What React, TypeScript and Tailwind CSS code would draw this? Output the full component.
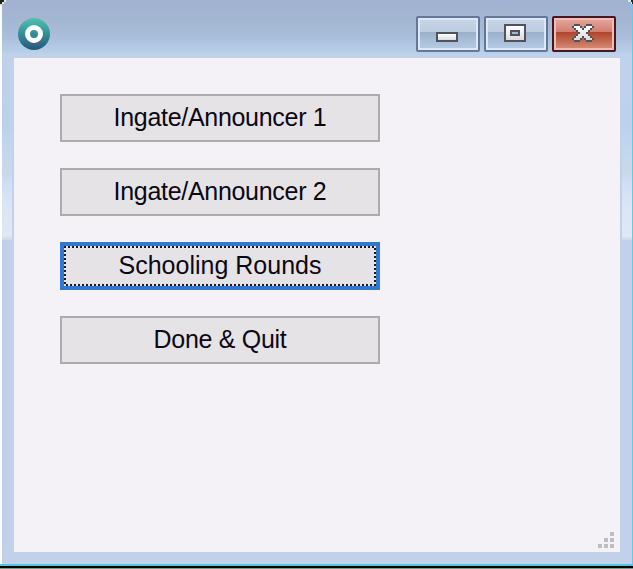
import React from "react";

const base =
  "flex h-12 w-80 items-center justify-center whitespace-pre bg-[#e5e3e6] text-[25px] leading-none text-[#0c0814] font-['Liberation_Sans',Arial,sans-serif]";

function PlainButton({ label }: { label: string }) {
  return (
    <button className={`${base} border-2 border-[#acacac] pb-0.5 tracking-[-0.3px]`}>
      <span>{label}</span>
    </button>
  );
}

function FocusedButton({ label }: { label: string }) {
  return (
    <button className={`${base} relative border-4 border-[#3277d2] pb-0.5`}>
      <svg className="absolute inset-0" width="312" height="40" shapeRendering="crispEdges">
        <g stroke="#1c1c1c" strokeWidth="2" strokeDasharray="2 2">
          <path d="M0 1H312M2 39H312" />
          <path d="M1 0V40M311 2V40" />
        </g>
      </svg>
      <span>{label}</span>
    </button>
  );
}

function Glyph({ children }: { children: React.ReactNode }) {
  return (
    <svg width="24" height="20" viewBox="0 0 24 20" shapeRendering="crispEdges">
      <defs>
        <linearGradient id="metal" x1="0" y1="0" x2="0" y2="1">
          <stop offset="0" stopColor="#ffffff" />
          <stop offset="1" stopColor="#dcdcdc" />
        </linearGradient>
      </defs>
      {children}
    </svg>
  );
}

const caption = "flex h-9 w-16 rounded-[2px] border-2";

function CaptionButton({ children }: { children: React.ReactNode }) {
  return (
    <div className={`${caption} border-[#64769a]`}>
      <div className="flex flex-1 items-center justify-center border-2 border-[#dce8f6] bg-[linear-gradient(180deg,#c8d4e5_0%,#bccbe0_43%,#9cafca_43%,#b4cae4_100%)]">
        {children}
      </div>
    </div>
  );
}

const sideGlow =
  "h-[182px] w-2.5 bg-[linear-gradient(180deg,#c1d1ea_0px,#bdd1ec_70px,#bfd5ee_80px,#c9d9e9_116px,#d0dff5_126px,#dbe6f4_150px,#dfe9f3_178px,#cbdcf0_181px)]";

export default function App() {
  return (
    <div className="relative flex h-[569px] w-[633px] flex-col overflow-hidden bg-[#7f968f]">
      <div className="flex h-[564px] bg-white pl-0.5">
        <div className="flex w-[630px] flex-col bg-[#c1d1ea]">
          <header className="flex h-[58px] items-start justify-between bg-[linear-gradient(180deg,#a1b2d2_0px,#a3b7d1_20px,#aabfdc_38px,#b9d0e9_53px,#c1d1ea_54px)] pr-4 pl-4 pt-4">
            <svg className="mt-0.5" width="32" height="32" viewBox="0 0 32 32">
              <defs>
                <linearGradient id="logo" x1="0" y1="0" x2="0" y2="1">
                  <stop offset="0" stopColor="#4fc3af" />
                  <stop offset=".5" stopColor="#358d96" />
                  <stop offset="1" stopColor="#28547d" />
                </linearGradient>
              </defs>
              <circle cx="16" cy="16" r="16" fill="url(#logo)" />
              <circle cx="16" cy="16" r="6.5" fill="none" stroke="#fff" strokeWidth="5" />
            </svg>
            <div className="flex gap-1">
              <CaptionButton>
                <Glyph>
                  <path d="M0 8H22V18H0Z" fill="#4f535e" />
                  <path d="M2 10H20V16H2Z" fill="url(#metal)" />
                </Glyph>
              </CaptionButton>
              <CaptionButton>
                <Glyph>
                  <path d="M0 0H22V18H0Z" fill="#4f535e" />
                  <path d="M2 2H20V16H2Z" fill="url(#metal)" />
                  <path d="M6 6H16V12H6Z" fill="#4f535e" />
                  <path d="M8 8H14V10H8Z" fill="#9eb9dc" />
                </Glyph>
              </CaptionButton>
              <div className={`${caption} border-[#481522]`}>
                <div className="flex flex-1 items-center justify-center border-2 border-[#edbdb4] bg-[linear-gradient(180deg,#e5a297_0%,#d17d70_43%,#ad442a_43%,#d48873_100%)]">
                  <Glyph>
                    <path
                      d="M2 0H8V2H10V4H12V2H14V0H20V2H22V4H20V6H18V8H16V10H18V12H20V14H22V16H20V18H14V16H12V14H10V16H8V18H2V16H0V14H2V12H4V10H6V8H4V6H2V4H0V2H2Z"
                      fill="#4f535e"
                    />
                    <path
                      d="M2 2H8V4H10V6H12V4H14V2H20V4H18V6H16V8H14V10H16V12H18V14H20V16H14V14H12V12H10V14H8V16H2V14H4V12H6V10H8V8H6V6H4V4H2Z"
                      fill="url(#metal)"
                    />
                  </Glyph>
                </div>
              </div>
            </div>
          </header>
          <div className="flex h-[494px]">
            <div className={`mr-0.5 ${sideGlow}`} />
            <main className="flex w-[606px] flex-col bg-[#f4f2f6] pl-[46px] pt-9">
              <div className="flex flex-1 flex-col gap-[26px]">
                <PlainButton label="Ingate/Announcer 1" />
                <PlainButton label="Ingate/Announcer 2" />
                <FocusedButton label="Schooling Rounds" />
                <PlainButton label="Done & Quit" />
              </div>
              <svg className="mb-1 mr-1.5 self-end" width="16" height="16" fill="#bdbcbe" shapeRendering="crispEdges">
                <path d="M12 0h4v4h-4zM6 6h4v4h-4zM12 6h4v4h-4zM0 12h4v4h-4zM6 12h4v4h-4zM12 12h4v4h-4z" />
              </svg>
            </main>
            <div className={`ml-0.5 ${sideGlow}`} />
          </div>
        </div>
        <div className="w-px bg-[#69c8ea]" />
      </div>
      <div className="h-0.5 bg-[#52c5de]" />
      <div className="h-0.5 bg-black" />
      <svg className="absolute left-0 top-0" width="633" height="8" shapeRendering="crispEdges">
        <path d="M0 0H6V2H4V4H2V6H0Z" fill="#e4e6e8" />
        <path d="M0 0H4V2H2V4H0Z" fill="#222" />
        <path d="M628 0H633V4H631V2H628Z" fill="#c8f0f6" />
        <path d="M631 0H633V4H632V2H631Z" fill="#222" />
      </svg>
    </div>
  );
}
